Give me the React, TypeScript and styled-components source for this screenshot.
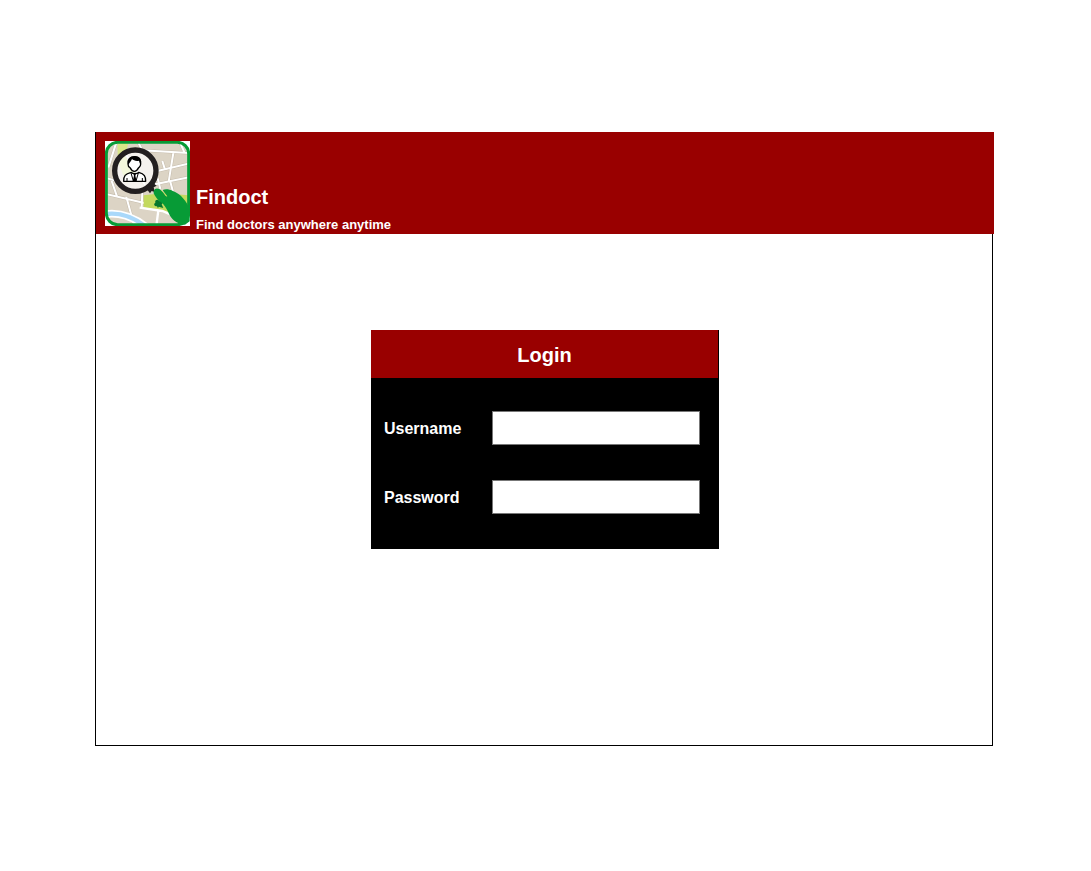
import React from "react";
import styled, { createGlobalStyle } from "styled-components";

const GlobalStyle = createGlobalStyle`
  *, *::before, *::after { box-sizing: border-box; }
  body {
    margin: 0;
    background: #fff;
    font-family: "Liberation Sans", Arial, sans-serif;
  }
`;

const Page = styled.div`
  min-height: 100vh;
  display: flex;
  padding: 132px 98px 125px 95px;
`;

const Frame = styled.div`
  flex: 1;
  display: flex;
  flex-direction: column;
  border: 1px solid #000;
`;

const Header = styled.header`
  display: flex;
  align-items: flex-start;
  gap: 6px;
  margin: -1px -2px 0 0;
  padding: 9px 9px 0;
  height: 102px;
  background: #990000;
  color: #fff;
`;

const Brand = styled.div`
  padding-top: 44px;
`;

const Title = styled.h1`
  margin: 0;
  font-size: 20px;
  line-height: 24px;
`;

const Tagline = styled.p`
  margin: 8px 0 0;
  font-size: 13px;
  font-weight: bold;
  line-height: 16px;
`;

const Main = styled.main`
  flex: 1;
  display: flex;
  justify-content: center;
  align-items: flex-start;
  padding: 96px 0 0 2px;
`;

const LoginForm = styled.form`
  width: 348px;
  background: #000;
  color: #fff;
`;

const LoginTitle = styled.h2`
  margin: 0 1px 0 0;
  padding-top: 2px;
  background: #990000;
  font-size: 20px;
  line-height: 46px;
  text-align: center;
`;

const Fields = styled.div`
  display: flex;
  flex-direction: column;
  gap: 35px;
  padding: 33px 19px 35px 13px;
`;

const Field = styled.div`
  display: flex;
  align-items: center;
`;

const Label = styled.label`
  width: 108px;
  padding-top: 2px;
  font-size: 16px;
  font-weight: bold;
  line-height: 18px;
`;

const Input = styled.input`
  flex: 1;
  min-width: 0;
  height: 34px;
  padding: 0 8px;
  border: 1px solid #777;
  border-radius: 0;
  background: #fff;
  font: 16px "Liberation Sans", Arial, sans-serif;
`;

const LogoImage = styled.svg`
  flex: none;
  width: 85px;
  height: 85px;
`;

const roads =
  "M110 28l145 8M148 92l107-25M150 130l105-22M205 36l-14 86M225 4l14 32M100 4l12 26M172 60l8 26M0 158l118 28M158 112l8 32M20 120l16 46M64 168l24 87M112 150l-2 50M34 4L10 80M0 110l44 12M60 36l60 96M196 122l8 30";

function Logo() {
  return (
    <LogoImage viewBox="0 0 255 255" role="img" aria-label="Findoct logo">
      <defs>
        <clipPath id="map">
          <rect x="4" y="4" width="247" height="247" rx="34" />
        </clipPath>
      </defs>
      <rect width="255" height="255" fill="#fff" />
      <g clipPath="url(#map)">
        <rect width="255" height="255" fill="#dcd4c5" />
        <path d="M37 4h34l-8 28 40 64-38 30-26-62z" fill="#d9e688" />
        <path d={roads} fill="none" stroke="#c4baaa" strokeWidth="9" />
        <path d={roads} fill="none" stroke="#fff" strokeWidth="6" />
        <path d="M116 163l55-6 84 6v62l-63-12-76-14z" fill="#c3d95f" />
        <path d="M104 200l68 10 83 36M160 208l-6 47" fill="none" stroke="#fff" strokeWidth="7" />
        <path d="M5 219c43-5 84 12 119 39" fill="none" stroke="#fff" strokeWidth="23" />
        <path d="M5 219c43-5 84 12 119 39" fill="none" stroke="#a9d8fa" strokeWidth="13" />
        <path d="M151 185c-3-8 9-13 12-4 7-4 13 4 7 9l5 11-14-4-2 5-3-6c-9 0-11-8-5-11z" fill="#06772d" />
      </g>
      <rect x="4" y="4" width="247" height="247" rx="34" fill="none" stroke="#079b36" strokeWidth="9" />
      <path d="M121 139l14 18 5-7 9 3-3-14 9-5-15-11z" fill="#231f20" />
      <circle cx="91" cy="89" r="62" fill="#fff" fillOpacity=".7" stroke="#231f20" strokeWidth="16" />
      <g stroke="#000" strokeWidth="4" fill="#fff" strokeLinejoin="round">
        <path d="M56 121c0-17 4-22 23-27 4 5 18 5 22 0 18 5 21 12 21 27z" />
        <path d="M75 80c-5-2-6-4-6-11-1-14 5-21 19-21s20 8 19 21c0 7-3 8-6 11-4 8-8 11-13 11s-9-3-13-11z" />
      </g>
      <path d="M70 71c-4-18 7-27 20-26 15 0 22 11 17 27-3-6-4-10-5-13-9 2-17-1-21-5-3 7-6 9-11 17z" />
      <path d="M85 98h8l-2 6 4 17H83l4-17z" />
      <path d="M78 96l7 24M100 96l-7 24M66 111v10M112 111v10" stroke="#000" strokeWidth="3" />
      <path d="M146 152c1-9 9-12 17-8 8 5 14 13 20 22l4 1c-4-8-10-13-14-20 8-4 21-2 29 2 28 11 42 32 52 54v38l-14 10c-19-1-36-12-45-27-6-12-11-23-20-34-9-9-19-14-25-26-3-5-5-8-4-12z" fill="#079b36" />
      <path d="M169 148c6 5 11 11 15 17" stroke="#c3d95f" strokeWidth="3" fill="none" />
    </LogoImage>
  );
}

export default function App() {
  return (
    <>
      <GlobalStyle />
      <Page>
        <Frame>
          <Header>
            <Logo />
            <Brand>
              <Title>Findoct</Title>
              <Tagline>Find doctors anywhere anytime</Tagline>
            </Brand>
          </Header>
          <Main>
            <LoginForm>
              <LoginTitle>Login</LoginTitle>
              <Fields>
                <Field>
                  <Label htmlFor="username">Username</Label>
                  <Input id="username" name="username" type="text" autoComplete="username" />
                </Field>
                <Field>
                  <Label htmlFor="password">Password</Label>
                  <Input id="password" name="password" type="password" autoComplete="current-password" />
                </Field>
              </Fields>
            </LoginForm>
          </Main>
        </Frame>
      </Page>
    </>
  );
}
